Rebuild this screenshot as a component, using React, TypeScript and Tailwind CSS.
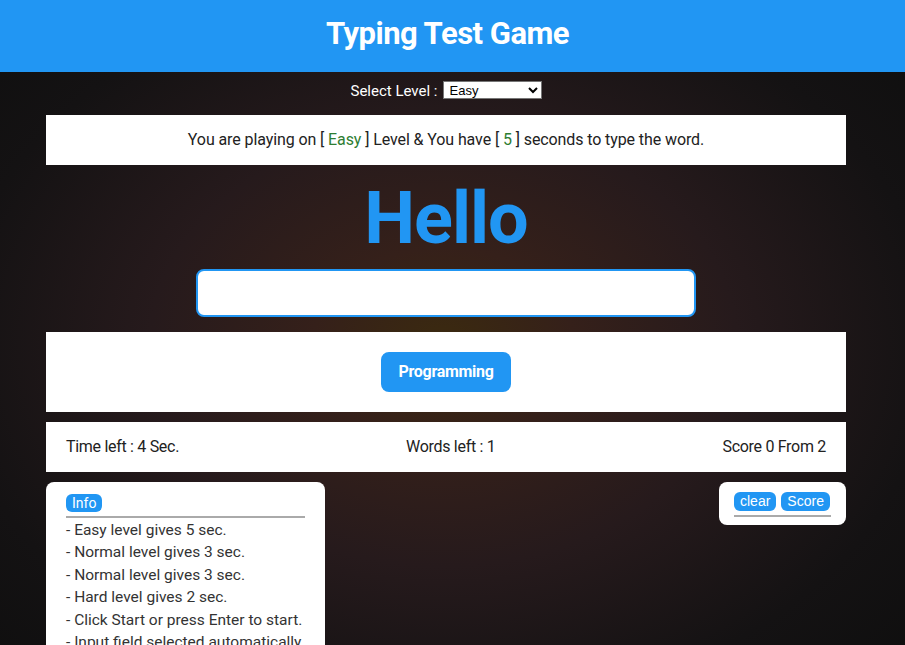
import React from "react";

const tips = [
  "- Easy level gives 5 sec.",
  "- Normal level gives 3 sec.",
  "- Normal level gives 3 sec.",
  "- Hard level gives 2 sec.",
  "- Click Start or press Enter to start.",
  "- Input field selected automatically.",
];

const App = () => {
  return (
    <div className="min-h-screen w-full bg-[radial-gradient(ellipse_at_49%_52%,#3b2a0f_0%,#35201a_20%,#261a1c_45%,#141213_75%,#0e0e0e_100%)] font-['Roboto',sans-serif] text-[#222]">
      <header className="h-[72px] bg-[#2196f3] flex items-center justify-center pb-[4px]">
        <h1 className="text-white text-[31px] font-bold tracking-[-0.5px] ml-[-10px]">Typing Test Game</h1>
      </header>

      <div className="w-[800px] ml-[46px]">
        <div className="flex justify-center gap-[5px] pt-[9px] h-[43px]">
          <span className="text-white text-[15px] leading-[18px] mt-[1px]">Select Level :</span>
          <select className="bg-white text-black text-[13px] font-['Liberation_Sans',sans-serif] w-[99px] h-[18px] border border-[#767676] px-[2px] leading-[16px]">
            <option>Easy</option>
            <option>Normal</option>
            <option>Hard</option>
          </select>
        </div>

        <div className="bg-white h-[50px] flex items-center justify-center text-[16px] tracking-[-0.1px]">
          <span>
            You are playing on [ <span className="text-[#2e7d32]">Easy</span> ] Level &amp; You have [{" "}
            <span className="text-[#2e7d32]">5</span> ] seconds to type the word.
          </span>
        </div>

        <div className="flex flex-col items-center">
          <div className="text-[#2196f3] text-[72px] font-bold leading-none mt-[18px] tracking-[-1px]">
            Hello
          </div>
          <input
            className="w-[500px] h-[48px] mt-[14px] bg-white border-2 border-[#2196f3] rounded-[8px] outline-none px-3 text-xl"
            autoFocus
          />
        </div>

        <div className="mt-[15px] bg-white h-[80px] flex items-center justify-center">
          <span className="bg-[#2196f3] text-white font-bold text-[16px] h-[40px] px-[17px] rounded-[8px] flex items-center tracking-[-0.3px]">
            Programming
          </span>
        </div>

        <div className="mt-[10px] bg-white h-[50px] flex items-center justify-between px-[20px] text-[16px] tracking-[-0.3px]">
          <span>Time left : 4 Sec.</span>
          <span>Words left : 1</span>
          <span>Score 0 From 2</span>
        </div>

        <div className="mt-[10px] flex justify-between items-start">
          <div className="w-[279px] bg-white rounded-[8px] px-[20px] pt-[12px] pb-3">
            <div className="flex pb-[4px] border-b-2 border-[#aaa]">
              <span className="bg-[#2196f3] text-white text-[14px] leading-[18px] px-[6px] rounded-[6px]">Info</span>
            </div>
            <ul className="text-[15.5px] text-[#333] leading-[22.4px] pt-[1px]">
              {tips.map((t, i) => (
                <li key={i} className="whitespace-nowrap">{t}</li>
              ))}
            </ul>
          </div>
          <div className="w-[127px] bg-white rounded-[8px] px-[15px] pt-[10px] pb-[8px]">
            <div className="flex gap-[5px] pb-[4px] border-b-2 border-[#aaa] font-['Liberation_Sans',sans-serif]">
              <span className="bg-[#2196f3] text-white text-[14px] leading-[19px] px-[6px] rounded-[6px]">clear</span>
              <span className="bg-[#2196f3] text-white text-[14px] leading-[19px] px-[6px] rounded-[6px]">Score</span>
            </div>
          </div>
        </div>
      </div>
    </div>
  );
};

export default App;
